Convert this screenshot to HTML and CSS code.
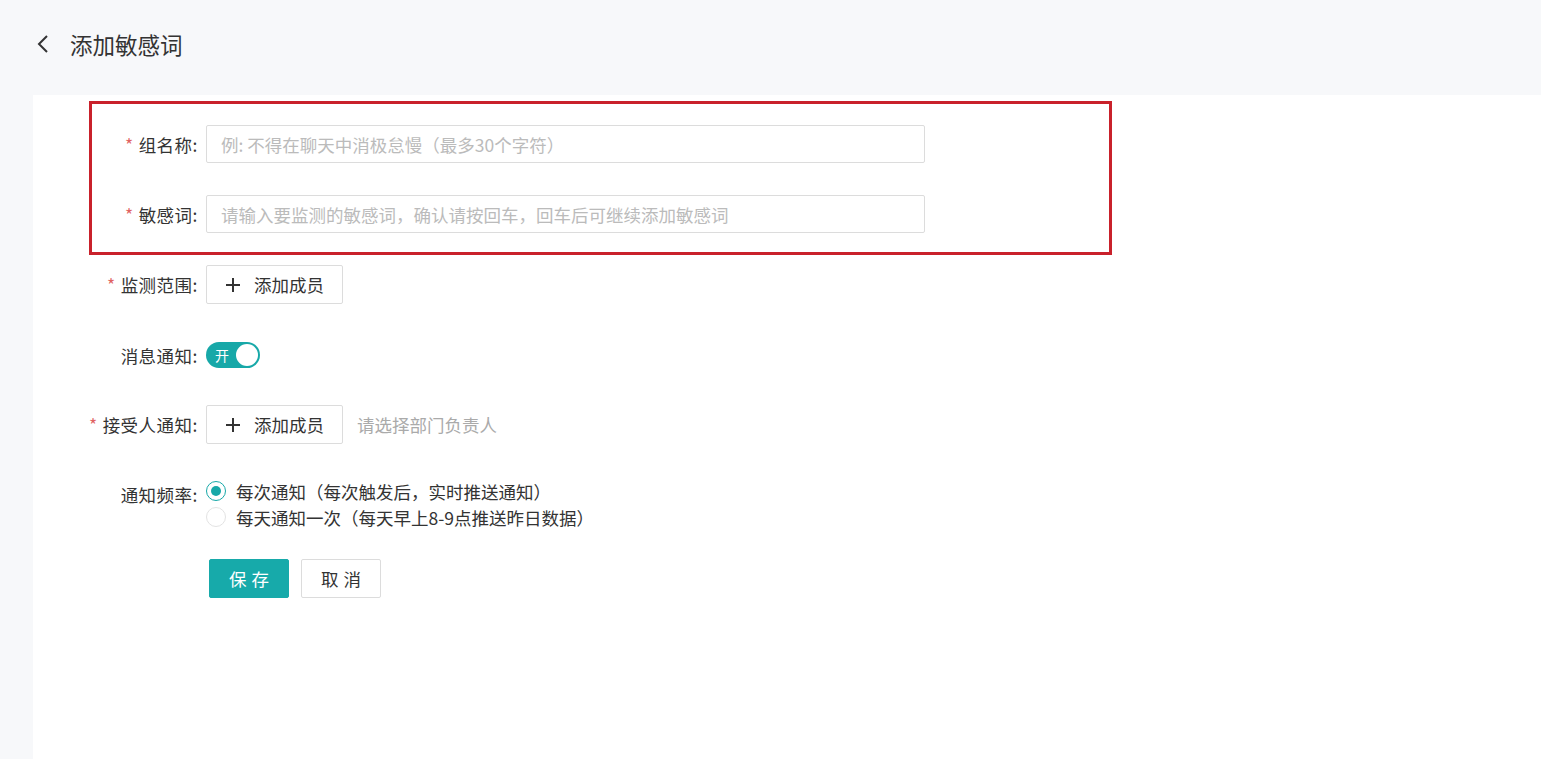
FILE: index.html
```html
<!DOCTYPE html>
<html lang="zh-CN">
<head>
    <meta charset="UTF-8">
    <meta name="viewport" content="width=device-width, initial-scale=1.0">
    <title>添加敏感词</title>
    <link rel="stylesheet" href="styles.css">
</head>
<body>

<div class="page-header">
    <span class="back-btn">
        <svg width="14" height="20" viewBox="0 0 14 20"><path d="M11 2 L3 10 L11 18" fill="none" stroke="#333" stroke-width="2"/></svg>
    </span>
    <h1>添加敏感词</h1>
</div>

<div class="panel">
    <form class="word-form">
        <div class="highlight">
            <div class="form-row">
                <label class="form-label"><span class="req">*</span>组名称:</label>
                <input type="text" class="text-input" placeholder="例: 不得在聊天中消极怠慢（最多30个字符）">
            </div>
            <div class="form-row">
                <label class="form-label"><span class="req">*</span>敏感词:</label>
                <input type="text" class="text-input" placeholder="请输入要监测的敏感词，确认请按回车，回车后可继续添加敏感词">
            </div>
        </div>

        <div class="form-row">
            <label class="form-label"><span class="req">*</span>监测范围:</label>
            <button type="button" class="add-btn">
                <svg class="plus" width="16" height="16" viewBox="0 0 16 16"><path d="M8 1 V15 M1 8 H15" stroke="#333" stroke-width="2"/></svg>
                添加成员
            </button>
        </div>

        <div class="form-row toggle-row">
            <label class="form-label">消息通知:</label>
            <span class="switch on"><span class="switch-text">开</span><span class="knob"></span></span>
        </div>

        <div class="form-row">
            <label class="form-label"><span class="req">*</span>接受人通知:</label>
            <button type="button" class="add-btn">
                <svg class="plus" width="16" height="16" viewBox="0 0 16 16"><path d="M8 1 V15 M1 8 H15" stroke="#333" stroke-width="2"/></svg>
                添加成员
            </button>
            <span class="hint">请选择部门负责人</span>
        </div>

        <div class="form-row radio-row">
            <label class="form-label">通知频率:</label>
            <div class="radio-group">
                <label class="radio checked"><span class="dot"></span>每次通知（每次触发后，实时推送通知）</label>
                <label class="radio"><span class="dot"></span>每天通知一次（每天早上8-9点推送昨日数据）</label>
            </div>
        </div>

        <div class="form-actions">
            <button type="button" class="btn btn-primary">保存</button>
            <button type="button" class="btn">取消</button>
        </div>
    </form>
</div>

</body>
</html>
```

FILE: styles.css
```css
body {
    margin: 0;
    font-family: "Microsoft YaHei", "Noto Sans CJK SC", "Noto Sans", sans-serif;
    font-size: 17.5px;
    color: #333;
    background-color: #f7f8fa;
}

/* Header */
.page-header {
    height: 95px;
    display: flex;
    align-items: center;
    padding-left: 36px;
    padding-bottom: 8px;
    box-sizing: border-box;
}

.back-btn {
    display: flex;
    width: 34px;
}

.page-header h1 {
    margin: 0;
    font-size: 22.5px;
    font-weight: normal;
    color: #333;
}

/* Panel */
.panel {
    margin-left: 33px;
    min-height: calc(100vh - 95px);
    background-color: #fff;
    padding: 6px 0 0 55px;
    box-sizing: border-box;
}

.highlight {
    width: 1023px;
    box-sizing: border-box;
    margin-left: 1px;
    border: 3px solid #c9212b;
    padding: 21px 0 19px 0;
    margin-bottom: 10px;
}

.highlight .form-row {
    margin-left: -4px;
    margin-bottom: 32px;
}

.highlight .form-row:last-child {
    margin-bottom: 0;
}

.form-row {
    display: flex;
    align-items: center;
    min-height: 38px;
    margin-bottom: 31px;
}

.form-label {
    width: 110px;
    flex-shrink: 0;
    display: flex;
    justify-content: flex-end;
    align-items: center;
    padding-right: 8px;
    white-space: nowrap;
    color: #333;
    letter-spacing: 0.5px;
}

.req {
    color: #e06262;
    margin-right: 5px;
}

.text-input {
    width: 719px;
    height: 38px;
    box-sizing: border-box;
    border: 1px solid #dcdcdc;
    border-radius: 2px;
    padding: 0 14px;
    font-family: inherit;
    font-size: 17.5px;
    color: #333;
}

.text-input::placeholder {
    color: #bbb;
}

.add-btn {
    height: 39px;
    width: 137px;
    border: 1px solid #dcdcdc;
    border-radius: 2px;
    background: #fff;
    font-family: inherit;
    font-size: 17.5px;
    color: #333;
    display: flex;
    align-items: center;
    padding: 0 0 0 18px;
}

.plus {
    margin-right: 13px;
}

.hint {
    margin-left: 14px;
    color: #aaa;
}

/* Switch */
.toggle-row {
    min-height: 40px;
    margin-bottom: 30px;
}

.switch {
    width: 54px;
    height: 26px;
    border-radius: 13px;
    background-color: #17a8a8;
    display: flex;
    align-items: center;
    justify-content: space-between;
    padding: 0 2px 0 9px;
    box-sizing: border-box;
}

.switch-text {
    color: #fff;
    font-size: 14px;
}

.knob {
    width: 22px;
    height: 22px;
    border-radius: 50%;
    background: #fff;
}

/* Radios */
.radio-row {
    align-items: flex-start;
    margin-top: 34px;
    margin-bottom: 29px;
}

.radio-row .form-label {
    line-height: 26px;
    padding-top: 4px;
}

.radio-group {
    display: flex;
    flex-direction: column;
}

.radio {
    display: flex;
    align-items: center;
    height: 26px;
}

.dot {
    width: 20px;
    height: 20px;
    box-sizing: border-box;
    border: 1px solid #e3e3e3;
    border-radius: 50%;
    margin-right: 10px;
    display: flex;
    align-items: center;
    justify-content: center;
}

.radio.checked .dot {
    border-color: #17a8a8;
}

.radio.checked .dot::after {
    content: "";
    width: 10px;
    height: 10px;
    border-radius: 50%;
    background: #17a8a8;
}

/* Actions */
.form-actions {
    display: flex;
    gap: 12px;
    padding-left: 121px;
}

.btn {
    width: 80px;
    height: 39px;
    border: 1px solid #dcdcdc;
    border-radius: 2px;
    background: #fff;
    font-family: inherit;
    font-size: 17.5px;
    letter-spacing: 5px;
    text-indent: 5px;
    color: #333;
}

.btn-primary {
    background-color: #17aaaa;
    border-color: #17aaaa;
    color: #fff;
}
```
